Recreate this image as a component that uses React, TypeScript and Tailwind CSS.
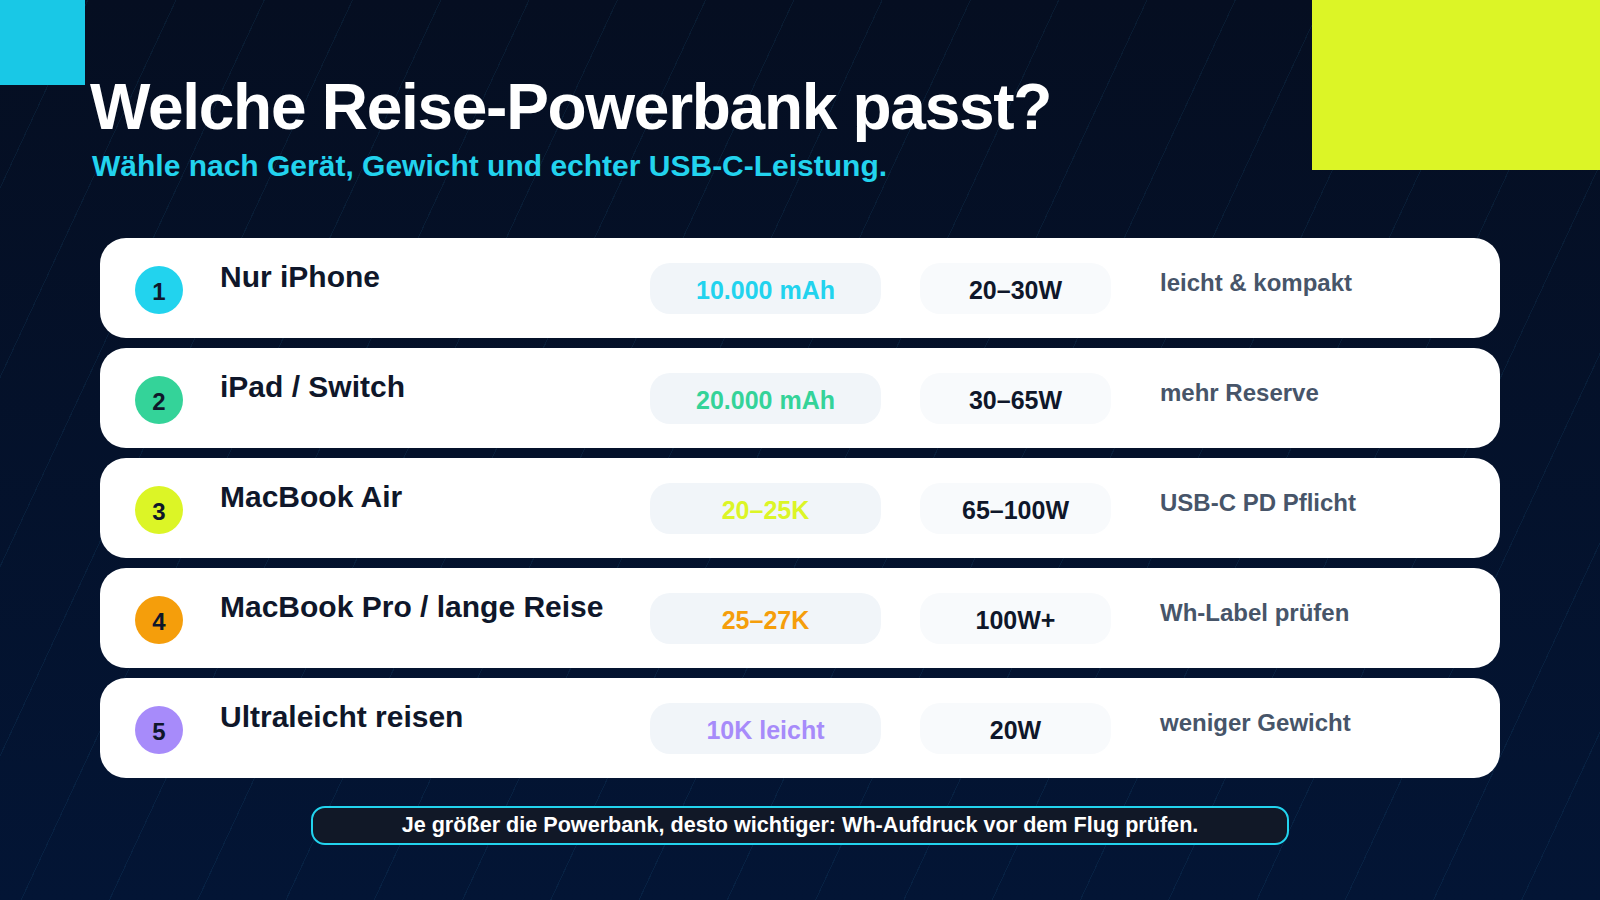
import React from "react";

type Row = {
  n: string;
  title: string;
  cap: string;
  watt: string;
  desc: string;
  circle: string;
  text: string;
};

const rows: Row[] = [
  { n: "1", title: "Nur iPhone", cap: "10.000 mAh", watt: "20–30W", desc: "leicht & kompakt", circle: "bg-[#22d3ee]", text: "text-[#22d3ee]" },
  { n: "2", title: "iPad / Switch", cap: "20.000 mAh", watt: "30–65W", desc: "mehr Reserve", circle: "bg-[#34d399]", text: "text-[#34d399]" },
  { n: "3", title: "MacBook Air", cap: "20–25K", watt: "65–100W", desc: "USB-C PD Pflicht", circle: "bg-[#dcf526]", text: "text-[#dcf526]" },
  { n: "4", title: "MacBook Pro / lange Reise", cap: "25–27K", watt: "100W+", desc: "Wh-Label prüfen", circle: "bg-[#f59e0b]", text: "text-[#f59e0b]" },
  { n: "5", title: "Ultraleicht reisen", cap: "10K leicht", watt: "20W", desc: "weniger Gewicht", circle: "bg-[#a78bfa]", text: "text-[#a78bfa]" },
];

export default function App() {
  return (
    <div
      className="relative w-[1600px] h-[900px] overflow-hidden font-['Liberation_Sans',Arial,sans-serif] bg-[repeating-linear-gradient(115deg,transparent_0px,transparent_79px,rgba(56,189,248,0.07)_79px,rgba(56,189,248,0.07)_80px),linear-gradient(180deg,#050e21_0%,#031535_100%)]"
    >
      <div className="absolute left-0 top-0 w-[85px] h-[85px] bg-[#19c8e6]" />
      <div className="absolute right-0 top-0 w-[288px] h-[170px] bg-[#dcf526]" />

      <div className="relative flex flex-col pt-[75px]">
        <div className="pl-[90px]">
          <h1 className="text-[64px] leading-none font-bold text-white tracking-[-0.02em]">
            Welche Reise-Powerbank passt?
          </h1>
          <p className="mt-[9px] pl-[2px] text-[30px] leading-[36px] font-bold text-[#22d3ee]">
            Wähle nach Gerät, Gewicht und echter USB-C-Leistung.
          </p>
        </div>

        <div className="mt-[54px] ml-[100px] w-[1400px] flex flex-col gap-[10px]">
          {rows.map((r) => (
            <div key={r.n} className="h-[100px] bg-white rounded-[26px] flex items-center pl-[35px]">
              <div className={`mt-[4px] w-12 h-12 rounded-full ${r.circle} flex items-center justify-center pt-[3px] text-[24px] font-bold text-[#0f172a]`}>
                {r.n}
              </div>
              <div className="self-start mt-[21px] ml-[37px] w-[430px] text-[30px] leading-[36px] font-bold text-[#0f172a]">
                {r.title}
              </div>
              <div className={`w-[231px] h-[51px] rounded-[20px] bg-[#f1f5f9] flex items-center justify-center pt-[6px] text-[25px] font-bold ${r.text}`}>
                {r.cap}
              </div>
              <div className="ml-[39px] w-[191px] h-[51px] rounded-[20px] bg-[#f8fafc] flex items-center justify-center pt-[6px] text-[25px] font-bold text-[#0f172a]">
                {r.watt}
              </div>
              <div className="self-start mt-[30px] ml-[49px] text-[24px] leading-[29px] font-bold text-[#475569]">
                {r.desc}
              </div>
            </div>
          ))}
        </div>

        <div className="mt-[28px] mx-auto w-[978px] h-[39px] rounded-[14px] border-2 border-[#22d3ee] bg-[#111827] flex items-center justify-center text-[21.6px] font-bold text-white">
          Je größer die Powerbank, desto wichtiger: Wh-Aufdruck vor dem Flug prüfen.
        </div>
      </div>
    </div>
  );
}
